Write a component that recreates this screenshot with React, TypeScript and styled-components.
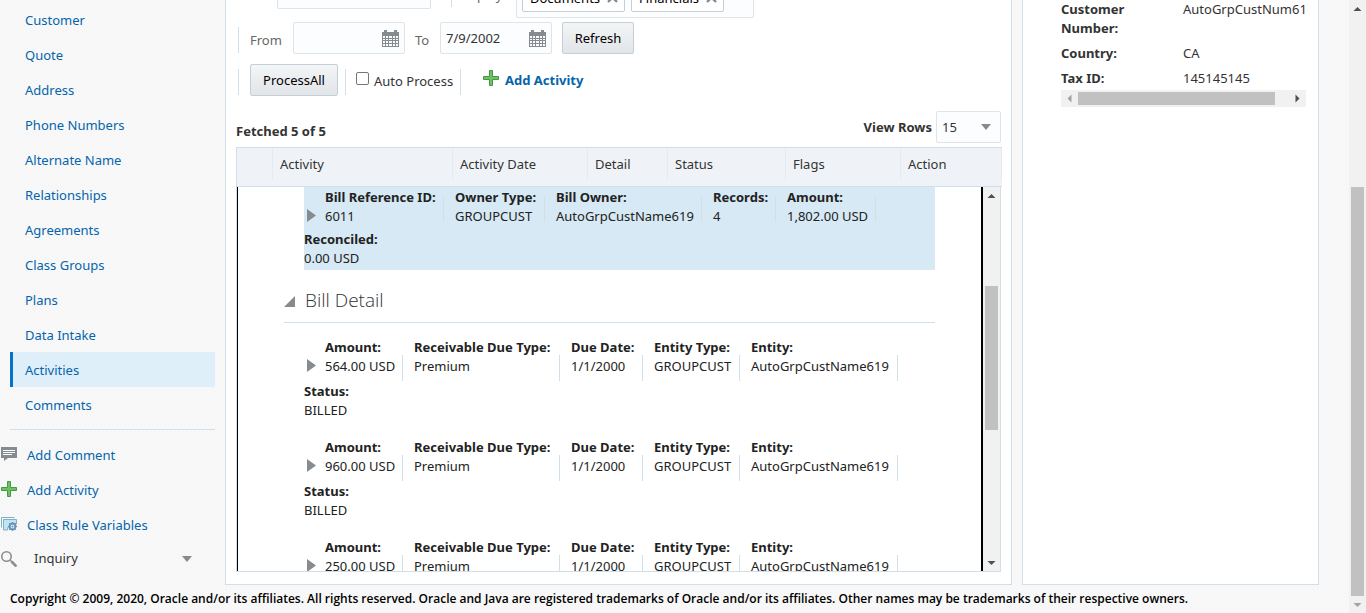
import React from "react";
import styled, { createGlobalStyle, css } from "styled-components";

const GlobalStyle = createGlobalStyle`
  *, *::before, *::after { box-sizing: border-box; }
  body {
    margin: 0;
    color: #333;
    font: 13px/19px "Noto Sans", "Open Sans", sans-serif;
    background: #f9f9f9 linear-gradient(45deg, #fafafa 25%, #f5f5f5 25% 50%, #fafafa 50% 75%, #f5f5f5 75%) 0 0 / 4px 4px;
  }
  button, input, select { font: inherit; color: inherit; }
  dl, dd, h2 { margin: 0; }
`;

const Shell = styled.div`
  display: flex;
  height: 100vh;
  overflow: hidden;
`;

const Page = styled.div`
  flex: 1;
  min-width: 0;
  display: flex;
  flex-direction: column;
`;

const Columns = styled.div`
  flex: 1;
  min-height: 0;
  display: flex;
  padding-right: 30px;
`;

const Sidebar = styled.aside`
  flex: 0 0 225px;
  padding-top: 2px;
`;

const NavList = styled.nav`
  display: flex;
  flex-direction: column;
  margin: 0 10px;
  padding-bottom: 7px;
  border-bottom: 1px solid #d1dfe8;
`;

const NavLink = styled.a<{ $active?: boolean }>`
  height: 35px;
  padding-left: 12px;
  line-height: 37px;
  color: #0464ac;
  text-decoration: none;
  border-left: 3px solid transparent;
  ${(p) => p.$active && css`
    background: #dfeffa;
    border-left-color: #0572ce;
  `}
`;

const ActionList = styled.div`
  display: flex;
  flex-direction: column;
  padding: 8px 0 0 1px;
`;

const ActionLink = styled.a`
  display: flex;
  align-items: center;
  gap: 10px;
  height: 35px;
  color: #0464ac;
  text-decoration: none;
  svg { flex: none; margin-bottom: 4px; }
`;

const InquiryButton = styled.button`
  display: flex;
  align-items: center;
  gap: 17px;
  width: 191px;
  height: 31px;
  padding: 0;
  border: 0;
  background: none;
  text-align: left;
  span { flex: 1; }
`;

const Panel = styled.section`
  background: #fff;
  border: 1px solid #d1dfe8;
  border-top: 0;
  overflow: hidden;
`;

const MainPanel = styled(Panel)`
  flex: 1;
  min-width: 0;
  display: flex;
  flex-direction: column;
  padding: 0 9px 12px 10px;
`;

const SidePanel = styled(Panel)`
  flex: 0 0 297px;
  margin-left: 10px;
  padding: 0 11px 0 38px;
`;

const FilterRow = styled.div`
  display: flex;
  align-items: flex-end;
  height: 18px;
  padding-left: 41px;
`;

const Toolbar = styled.div`
  display: flex;
  align-items: center;
  height: 32px;
  margin-top: 4px;
  padding-left: 2px;
  & + & { margin-top: 10px; }
`;

const Bar = styled.span<{ $gap?: number }>`
  flex: none;
  width: 1px;
  height: 26px;
  margin-top: 4px;
  margin-right: ${(p) => p.$gap ?? 10}px;
  background: #d1dfe8;
`;

const FilterBar = styled(Bar)`
  margin-bottom: 11px;
`;

const FieldLabel = styled.label<{ $width: number; $indent?: number }>`
  width: ${(p) => p.$width}px;
  padding-top: 4px;
  padding-left: ${(p) => p.$indent ?? 0}px;
  color: #666;
`;

const Box = styled.div<{ $width: number }>`
  display: flex;
  align-items: center;
  width: ${(p) => p.$width}px;
  height: 32px;
  padding: 0 5px;
  border: 1px solid #dfe4e7;
  border-radius: 2px;
  background: #fcfdfe;
  input {
    flex: 1;
    min-width: 0;
    padding: 0;
    border: 0;
    outline: 0;
    background: none;
  }
`;

const SearchBox = styled(Box)`
  margin: 0 20px 9px 0;
`;

const ChipBox = styled(Box)`
  align-items: flex-end;
  gap: 6px;
  padding: 0 5px 5px;
`;

const Chip = styled.span`
  display: flex;
  align-items: center;
  gap: 7px;
  height: 28px;
  padding: 0 6px 0 7px;
  border: 1px solid #c4ced7;
  border-radius: 2px;
  background: #fff;
  color: #000;
`;

const ChipRemove = styled.button`
  display: flex;
  padding: 0;
  border: 0;
  background: none;
`;

const DisplayLabel = styled(FieldLabel)`
  margin-bottom: 13px;
`;

const PushButton = styled.button<{ $width: number }>`
  width: ${(p) => p.$width}px;
  height: 32px;
  padding: 0;
  border: 1px solid #c4ced7;
  border-radius: 2px;
  background: linear-gradient(#f3f5f6, #e1e5e7);
  color: #000;
`;

const RefreshButton = styled(PushButton)`
  margin-left: 10px;
`;

const ProcessButton = styled(PushButton)`
  margin-right: 7px;
`;

const CheckLabel = styled.label`
  display: flex;
  align-items: center;
  gap: 5px;
  width: 104px;
  padding-top: 2px;
  white-space: nowrap;
  input {
    appearance: none;
    width: 13px;
    height: 13px;
    margin: 0 0 6px;
    border: 1px solid #767676;
    border-radius: 2px;
    background: #fff;
  }
`;

const AddLink = styled.a`
  display: flex;
  align-items: center;
  gap: 6px;
  color: #0464ac;
  font-weight: 700;
  text-decoration: none;
  svg { margin-bottom: 4px; }
`;

const TableBar = styled.div`
  display: flex;
  align-items: center;
  justify-content: space-between;
  height: 32px;
  margin: 15px 1px 4px 0;
  font-weight: 700;
`;

const Fetched = styled.span`
  padding-top: 8px;
`;

const ViewRows = styled.label`
  display: flex;
  align-items: center;
  gap: 4px;
`;

const SelectBox = styled.span`
  display: flex;
  align-items: center;
  width: 65px;
  height: 32px;
  padding-right: 9px;
  border: 1px solid #dfe4e7;
  border-radius: 2px;
  background: #fcfdfe;
  font-weight: 400;
  select {
    flex: 1;
    min-width: 0;
    padding: 0 0 0 5px;
    border: 0;
    outline: 0;
    appearance: none;
    background: none;
  }
`;

const Table = styled.table`
  width: 100%;
  table-layout: fixed;
  border-collapse: separate;
  border-spacing: 0;
  th, td { padding: 0; }
  tbody td { vertical-align: top; }
`;

const Col = styled.col<{ $width?: number }>`
  width: ${(p) => (p.$width ? `${p.$width}px` : "auto")};
`;

const HeadCell = styled.th`
  height: 40px;
  border: solid #d1dfe8;
  border-width: 1px 0;
  background: #eff3f8;
  font-weight: 400;
  text-align: left;
  &:first-child { border-left-width: 1px; }
  span {
    display: block;
    height: 32px;
    margin-bottom: 6px;
    padding-left: 7px;
    line-height: 33px;
    border-right: 1px solid #e6eaee;
  }
`;

const ScrollPane = styled.div`
  display: flex;
  height: calc(100vh - 228px);
  margin-right: 1px;
  border: solid #d1dfe8;
  border-width: 0 1px 1px;
  overflow: hidden;
`;

const PaneContent = styled.div`
  flex: 1;
  min-width: 0;
  height: 100%;
  overflow: hidden;
  padding: 0 46px;
  border: solid #000;
  border-width: 0 2px 0 1px;
`;

const BillSummary = styled.div`
  height: 83px;
  margin-left: 20px;
  padding-top: 1px;
  background: #d6e9f4;
`;

const Record = styled.div`
  height: 100px;
  margin-left: 20px;
`;

const RecordRow = styled.div<{ $gap: number }>`
  display: flex;
  margin-bottom: ${(p) => p.$gap}px;
`;

const Disclosure = styled.button`
  display: flex;
  align-items: flex-start;
  width: 21px;
  padding: 21px 0 0 3px;
  border: 0;
  background: none;
`;

const Field = styled.div<{ $width?: number; $low?: boolean }>`
  flex: none;
  width: ${(p) => (p.$width ? `${p.$width}px` : "auto")};
  white-space: nowrap;
  color: #222;
  ${(p) => p.$width && css`
    margin-right: 11px;
    background: linear-gradient(#d1dfe8, #d1dfe8) right ${p.$low ? 17 : 8}px / 1px 26px no-repeat;
    padding-bottom: ${p.$low ? 6 : 0}px;
  `}
  b { display: block; }
`;

const SectionHeader = styled.div`
  display: flex;
  align-items: center;
  gap: 10px;
  height: 53px;
  margin-bottom: 15px;
  padding-top: 8px;
  border-bottom: 1px solid #d1dfe8;
  h2 {
    font: 300 19px/27px "Open Sans", "Noto Sans", sans-serif;
  }
`;

const ToggleButton = styled.button`
  display: flex;
  padding: 2px 0 0;
  border: 0;
  background: none;
`;

const Details = styled.dl`
  display: grid;
  grid-template-columns: 122px 1fr;
  row-gap: 6px;
  overflow: hidden;
  margin-bottom: 2px;
  dt { width: 90px; font-weight: 700; }
  dd { white-space: nowrap; overflow: hidden; }
`;

const ScrollTrack = styled.div<{ $horizontal?: boolean }>`
  flex: none;
  display: flex;
  flex-direction: ${(p) => (p.$horizontal ? "row" : "column")};
  align-items: center;
  background: #f1f1f1;
  ${(p) => (p.$horizontal ? "height: 17px; margin-right: 1px;" : "width: 17px;")}
  svg { flex: none; }
`;

const Space = styled.span<{ $grow: number }>`
  flex: ${(p) => p.$grow} 0 0;
`;

const Thumb = styled.span<{ $grow: number }>`
  flex: ${(p) => p.$grow} 0 0;
  min-width: 13px;
  min-height: 13px;
  background: #c1c1c1;
`;

const Footer = styled.footer`
  height: 28px;
  padding-left: 10px;
  color: #000;
  font: 600 12px/28px "Open Sans", "Noto Sans", sans-serif;
  white-space: nowrap;
`;

type Dir = "up" | "down" | "left" | "right";
const arrowPaths: Record<Dir, string> = {
  up: "M4.500 11 8.500 7 12.500 11z",
  down: "M4.500 7 8.500 11 12.500 7z",
  left: "M10.500 4.500 6.500 8.500 10.500 12.500z",
  right: "M6.500 4.500 10.500 8.500 6.500 12.500z",
};

const ScrollArrow = ({ dir, dim }: { dir: Dir; dim?: boolean }) => (
  <svg width="17" height="17" viewBox="0 0 17 17" aria-hidden="true">
    <path d={arrowPaths[dir]} fill={dim ? "#a3a3a3" : "#505050"} />
  </svg>
);

type ScrollBarProps = { before: number; size: number; after: number; horizontal?: boolean; dimStart?: boolean; dimEnd?: boolean };
const ScrollBar = ({ before, size, after, horizontal, dimStart, dimEnd }: ScrollBarProps) => (
  <ScrollTrack $horizontal={horizontal} aria-hidden="true">
    <ScrollArrow dir={horizontal ? "left" : "up"} dim={dimStart} />
    <Space $grow={before} />
    <Thumb $grow={size} />
    <Space $grow={after} />
    <ScrollArrow dir={horizontal ? "right" : "down"} dim={dimEnd} />
  </ScrollTrack>
);

const CommentIcon = () => (
  <svg width="16" height="16" viewBox="0 0 16 16" aria-hidden="true">
    <path d="M0 1h16v11H7l-4 3v-3H0z" fill="#868b90" />
    <path d="M2 4.500h12M2 6.500h12M2 8.500h9" stroke="#fff" />
  </svg>
);

const PlusIcon = () => (
  <svg width="16" height="16" viewBox="0 0 16 16" aria-hidden="true">
    <path d="M6.500.5h3v6h6v3h-6v6h-3v-6h-6v-3h6z" fill="#6cc067" stroke="#459a41" strokeLinejoin="round" />
  </svg>
);

const RuleIcon = () => (
  <svg width="16" height="16" viewBox="0 0 16 16" aria-hidden="true">
    <path d="M.5 11.500V1.500h13" fill="none" stroke="#83afc0" />
    <path d="M2.500 3.500h13V8H11l-4 3-.5 3h-4z" fill="#b9e7f6" stroke="#83afc0" />
    <path d="M11.500 6v9M7 10.500h9M8.300 7.300l6.400 6.400M14.700 7.300l-6.400 6.400" stroke="#6991b5" strokeWidth="1.600" />
    <circle cx="11.500" cy="10.500" r="2.800" fill="#e8f1f8" stroke="#6991b5" strokeWidth="1.800" />
    <circle cx="11.500" cy="10.500" r="1" fill="#6991b5" />
  </svg>
);

const SearchIcon = () => (
  <svg width="16" height="16" viewBox="0 0 16 16" aria-hidden="true">
    <circle cx="5.500" cy="5.500" r="4.700" fill="none" stroke="#8c8f92" strokeWidth="1.600" />
    <path d="M9 9l2 2" stroke="#8c8f92" strokeWidth="1.500" />
    <path d="M10.500 10.500l5 5" stroke="#8c8f92" strokeWidth="2.600" />
  </svg>
);

const CalendarIcon = () => (
  <svg width="17" height="17" viewBox="0 0 17 17" aria-hidden="true">
    <path d="M0 2h2V0h3v2h7V0h3v2h2v15H0z" fill="#868b90" />
    <path
      d="M1 6h2v2H1zM4 6h2v2H4zM7 6h3v2H7zM11 6h2v2h-2zM14 6h2v2h-2zM1 9h2v1H1zM4 9h2v1H4zM7 9h3v1H7zM11 9h2v1h-2zM14 9h2v1h-2zM1 11h2v2H1zM4 11h2v2H4zM7 11h3v2H7zM11 11h2v2h-2zM14 11h2v2h-2zM1 14h2v2H1zM4 14h2v2H4zM7 14h3v2H7zM11 14h2v2h-2zM14 14h2v2h-2z"
      fill="#fcfdfe"
    />
  </svg>
);

const CloseIcon = () => (
  <svg width="11" height="10" viewBox="0 0 11 10" aria-hidden="true">
    <path d="M1 0l9 9M10 0L1 9" stroke="#868b90" strokeWidth="2.400" />
  </svg>
);

const DropIcon = () => (
  <svg width="10" height="6" viewBox="0 0 10 6" aria-hidden="true">
    <path d="M0 0h10L5 6z" fill="#868b90" />
  </svg>
);

const RightIcon = () => (
  <svg width="9" height="13" viewBox="0 0 9 13" aria-hidden="true">
    <path d="M0 0l9 6.500L0 13z" fill="#868b90" />
  </svg>
);

const OpenIcon = () => (
  <svg width="11" height="11" viewBox="0 0 11 11" aria-hidden="true">
    <path d="M11 0v11H0z" fill="#868b90" />
  </svg>
);

const navItems = [
  "Customer", "Quote", "Address", "Phone Numbers", "Alternate Name", "Relationships",
  "Agreements", "Class Groups", "Plans", "Data Intake", "Activities", "Comments",
];

const columns: [string, number?][] = [
  ["", 37], ["Activity", 180], ["Activity Date", 135], ["Detail", 80], ["Status", 118], ["Flags", 115], ["Action"],
];

const summary: [string, string, number][] = [
  ["Bill Reference ID:", "6011", 119],
  ["Owner Type:", "GROUPCUST", 90],
  ["Bill Owner:", "AutoGrpCustName619", 146],
  ["Records:", "4", 63],
  ["Amount:", "1,802.00 USD", 89],
];

const amounts = ["564.00 USD", "960.00 USD", "250.00 USD"];
const billFields = (amount: string): [string, string, number][] => [
  ["Amount:", amount, 78],
  ["Receivable Due Type:", "Premium", 146],
  ["Due Date:", "1/1/2000", 72],
  ["Entity Type:", "GROUPCUST", 86],
  ["Entity:", "AutoGrpCustName619", 147],
];

export default function App() {
  return (
    <>
      <GlobalStyle />
      <Shell>
        <Page>
          <Columns>
            <Sidebar>
              <NavList>
                {navItems.map((item) => (
                  <NavLink href="#" key={item} $active={item === "Activities"}>{item}</NavLink>
                ))}
              </NavList>
              <ActionList>
                <ActionLink href="#"><CommentIcon />Add Comment</ActionLink>
                <ActionLink href="#"><PlusIcon />Add Activity</ActionLink>
                <ActionLink href="#"><RuleIcon />Class Rule Variables</ActionLink>
                <InquiryButton type="button"><SearchIcon /><span>Inquiry</span><DropIcon /></InquiryButton>
              </ActionList>
            </Sidebar>

            <MainPanel>
              <FilterRow>
                <SearchBox $width={154}><input type="text" aria-label="Search" /></SearchBox>
                <FilterBar $gap={6} />
                <DisplayLabel as="span" $width={58}>Display</DisplayLabel>
                <ChipBox $width={238}>
                  <Chip>Documents<ChipRemove type="button" aria-label="Remove Documents"><CloseIcon /></ChipRemove></Chip>
                  <Chip>Financials<ChipRemove type="button" aria-label="Remove Financials"><CloseIcon /></ChipRemove></Chip>
                </ChipBox>
              </FilterRow>
              <Toolbar>
                <Bar $gap={11} />
                <FieldLabel htmlFor="from" $width={43}>From</FieldLabel>
                <Box $width={112}><input id="from" type="text" /><CalendarIcon /></Box>
                <FieldLabel htmlFor="to" $width={35} $indent={10}>To</FieldLabel>
                <Box $width={112}><input id="to" type="text" defaultValue="7/9/2002" /><CalendarIcon /></Box>
                <RefreshButton type="button" $width={72}>Refresh</RefreshButton>
              </Toolbar>
              <Toolbar>
                <Bar $gap={11} />
                <ProcessButton type="button" $width={88}>ProcessAll</ProcessButton>
                <Bar />
                <CheckLabel><input type="checkbox" />Auto Process</CheckLabel>
                <Bar $gap={22} />
                <AddLink href="#"><PlusIcon />Add Activity</AddLink>
              </Toolbar>

              <TableBar>
                <Fetched>Fetched 5 of 5</Fetched>
                <ViewRows>
                  View Rows
                  <SelectBox>
                    <select defaultValue="15"><option>15</option><option>30</option></select>
                    <DropIcon />
                  </SelectBox>
                </ViewRows>
              </TableBar>

              <Table>
                <colgroup>
                  {columns.map(([name, width]) => <Col key={name} $width={width} />)}
                </colgroup>
                <thead>
                  <tr>{columns.map(([name]) => <HeadCell key={name} scope="col"><span>{name}</span></HeadCell>)}</tr>
                </thead>
                <tbody>
                  <tr>
                    <td colSpan={columns.length}>
                      <ScrollPane>
                        <PaneContent>
                          <BillSummary>
                            <RecordRow $gap={4}>
                              <Disclosure type="button" aria-label="Expand bill"><RightIcon /></Disclosure>
                              {summary.map(([label, value, width]) => (
                                <Field key={label} $width={width}><b>{label}</b>{value}</Field>
                              ))}
                            </RecordRow>
                            <Field><b>Reconciled:</b>0.00 USD</Field>
                          </BillSummary>
                          <SectionHeader>
                            <ToggleButton type="button" aria-label="Collapse bill detail"><OpenIcon /></ToggleButton>
                            <h2>Bill Detail</h2>
                          </SectionHeader>
                          {amounts.map((amount) => (
                            <Record key={amount}>
                              <RecordRow $gap={0}>
                                <Disclosure type="button" aria-label={`Expand ${amount}`}><RightIcon /></Disclosure>
                                {billFields(amount).map(([label, value, width]) => (
                                  <Field key={label} $width={width} $low><b>{label}</b>{value}</Field>
                                ))}
                              </RecordRow>
                              <Field><b>Status:</b>BILLED</Field>
                            </Record>
                          ))}
                        </PaneContent>
                        <ScrollBar before={82} size={144} after={124} />
                      </ScrollPane>
                    </td>
                  </tr>
                </tbody>
              </Table>
            </MainPanel>

            <SidePanel>
              <Details>
                <dt>Customer Number:</dt><dd>AutoGrpCustNum619</dd>
                <dt>Country:</dt><dd>CA</dd>
                <dt>Tax ID:</dt><dd>145145145</dd>
              </Details>
              <ScrollBar horizontal before={0} size={197} after={14} dimStart />
            </SidePanel>
          </Columns>
          <Footer>
            Copyright © 2009, 2020, Oracle and/or its affiliates. All rights reserved. Oracle and Java are registered trademarks of Oracle and/or its affiliates. Other names may be trademarks of their respective owners.
          </Footer>
        </Page>
        <ScrollBar before={170} size={409} after={0} dimEnd />
      </Shell>
    </>
  );
}
